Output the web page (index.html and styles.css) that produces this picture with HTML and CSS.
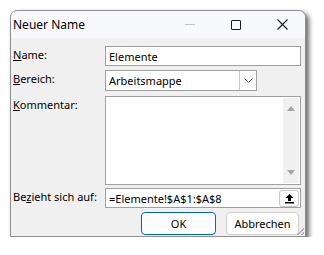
FILE: index.html
```html
<!DOCTYPE html>
<html lang="de">
<head>
  <meta charset="UTF-8">
  <title>Neuer Name</title>
  <link rel="stylesheet" href="styles.css">
</head>
<body>

  <div class="dialog">
    <!-- Title bar -->
    <div class="titlebar">
      <span class="title">Neuer Name</span>
      <div class="caption-buttons">
        <span class="cap cap-min"></span>
        <span class="cap cap-max"></span>
        <span class="cap cap-close">
          <svg width="11" height="11" viewBox="0 0 11 11"><path d="M0.5 0.5 L10.5 10.5 M10.5 0.5 L0.5 10.5" stroke="#1a1a1a" stroke-width="1.1" fill="none"/></svg>
        </span>
      </div>
    </div>

    <!-- Form -->
    <div class="form">
      <label class="label"><u>N</u>ame:</label>
      <div class="field">Elemente</div>

      <label class="label"><u>B</u>ereich:</label>
      <div class="select">
        <span class="select-text">Arbeitsmappe</span>
        <span class="select-btn">
          <svg width="9" height="5" viewBox="0 0 9 5"><path d="M0.5 0.5 L4.5 4.5 L8.5 0.5" stroke="#606060" fill="none"/></svg>
        </span>
      </div>

      <label class="label"><u>K</u>ommentar:</label>
      <div class="textarea">
        <div class="scrollbar">
          <span class="arrow-up"></span>
          <span class="arrow-down"></span>
        </div>
      </div>

      <label class="label">Be<u>z</u>ieht sich auf:</label>
      <div class="field field-ref">
        <span>=Elemente!$A$1:$A$8</span>
        <span class="ref-btn">
          <svg width="11" height="11" viewBox="0 0 11 11"><path d="M5.5 1 L1.5 5 H4 V8 H7 V5 H9.5 Z" fill="#000"/><rect x="1" y="9" width="9" height="1.5" fill="#000"/></svg>
        </span>
      </div>

      <div class="buttons">
        <button class="btn btn-default">OK</button>
        <button class="btn">Abbrechen</button>
      </div>
    </div>
    <span class="grip"></span>
  </div>

</body>
</html>
```

FILE: styles.css
```css
body {
  margin: 0;
  background: #ffffff;
  font-family: 'Noto Sans', sans-serif;
  font-size: 11px;
  color: #000;
}

.dialog {
  position: relative;
  margin: 10px 0 0 10px;
  width: 294px;
  height: 225px;
  border: 1px solid #8f8f8f;
  border-radius: 7px 7px 0 0;
  background: #f0f0f0;
  box-shadow: 3px 3px 5px rgba(0, 0, 0, 0.6);
  display: flex;
  flex-direction: column;
}

.titlebar {
  height: 27px;
  background: #f7f9fc;
  border-radius: 7px 7px 0 0;
  display: flex;
  align-items: center;
  justify-content: space-between;
  padding-left: 2px;
}

.title {
  font-size: 12px;
  line-height: 16px;
}

.caption-buttons {
  display: flex;
  align-items: center;
}

.cap {
  width: 46px;
  height: 27px;
  display: flex;
  align-items: center;
  justify-content: center;
}

.cap-min::before {
  content: "";
  width: 10px;
  height: 1px;
  background: #c4c4c4;
}

.cap-max::before {
  content: "";
  width: 8px;
  height: 8px;
  border: 1px solid #1a1a1a;
  border-radius: 1px;
}

.form {
  flex: 1;
  display: grid;
  grid-template-columns: 92px 196px;
  grid-template-rows: auto;
  row-gap: 3px;
  align-items: start;
  padding: 8px 4px 0 2px;
}

.label {
  line-height: 14px;
  padding-top: 2px;
}

.field {
  box-sizing: border-box;
  height: 20px;
  background: #fff;
  border: 1px solid #a0a0a0;
  padding: 0 3px;
  display: flex;
  align-items: center;
  justify-content: space-between;
}

.select {
  box-sizing: border-box;
  width: 152px;
  height: 21px;
  margin-bottom: 1px;
  background: #fff;
  border: 1px solid #a0a0a0;
  display: flex;
  align-items: center;
  justify-content: space-between;
}

.select-text {
  padding-left: 3px;
}

.select-btn {
  width: 16px;
  height: 19px;
  border-left: 1px solid #c8c8c8;
  display: flex;
  align-items: center;
  justify-content: center;
}

.textarea {
  box-sizing: border-box;
  height: 89px;
  background: #fff;
  border: 1px solid #a0a0a0;
  display: flex;
  justify-content: flex-end;
  padding: 1px;
}

.scrollbar {
  width: 16px;
  background: #f0f0f0;
  display: flex;
  flex-direction: column;
  justify-content: space-between;
  align-items: center;
  padding: 8px 0 8px;
}

.arrow-up {
  border-left: 4px solid transparent;
  border-right: 4px solid transparent;
  border-bottom: 5px solid #a3a3a3;
}

.arrow-down {
  border-left: 4px solid transparent;
  border-right: 4px solid transparent;
  border-top: 5px solid #a3a3a3;
}

.field-ref {
  padding-right: 1px;
}

.ref-btn {
  box-sizing: border-box;
  width: 20px;
  height: 17px;
  border: 1px solid #c8c8c8;
  border-radius: 3px;
  display: flex;
  align-items: center;
  justify-content: center;
}

.buttons {
  grid-column: 1 / 3;
  display: flex;
  justify-content: flex-end;
  gap: 10px;
  padding-right: 2px;
}

.btn {
  height: 23px;
  font-family: 'Noto Sans', sans-serif;
  font-size: 11px;
  color: #000;
  background: #fdfdfd;
  border: 1px solid #d0d0d0;
  border-radius: 4px;
  padding: 0;
  width: 73px;
}

.btn-default {
  width: 75px;
  border-color: #0067c0;
}

.grip {
  position: absolute;
  right: 1px;
  bottom: 1px;
  width: 8px;
  height: 8px;
  background: linear-gradient(135deg, transparent 55%, #b0b0b0 55%, #b0b0b0 65%, transparent 65%, transparent 78%, #b0b0b0 78%, #b0b0b0 88%, transparent 88%);
}
```
